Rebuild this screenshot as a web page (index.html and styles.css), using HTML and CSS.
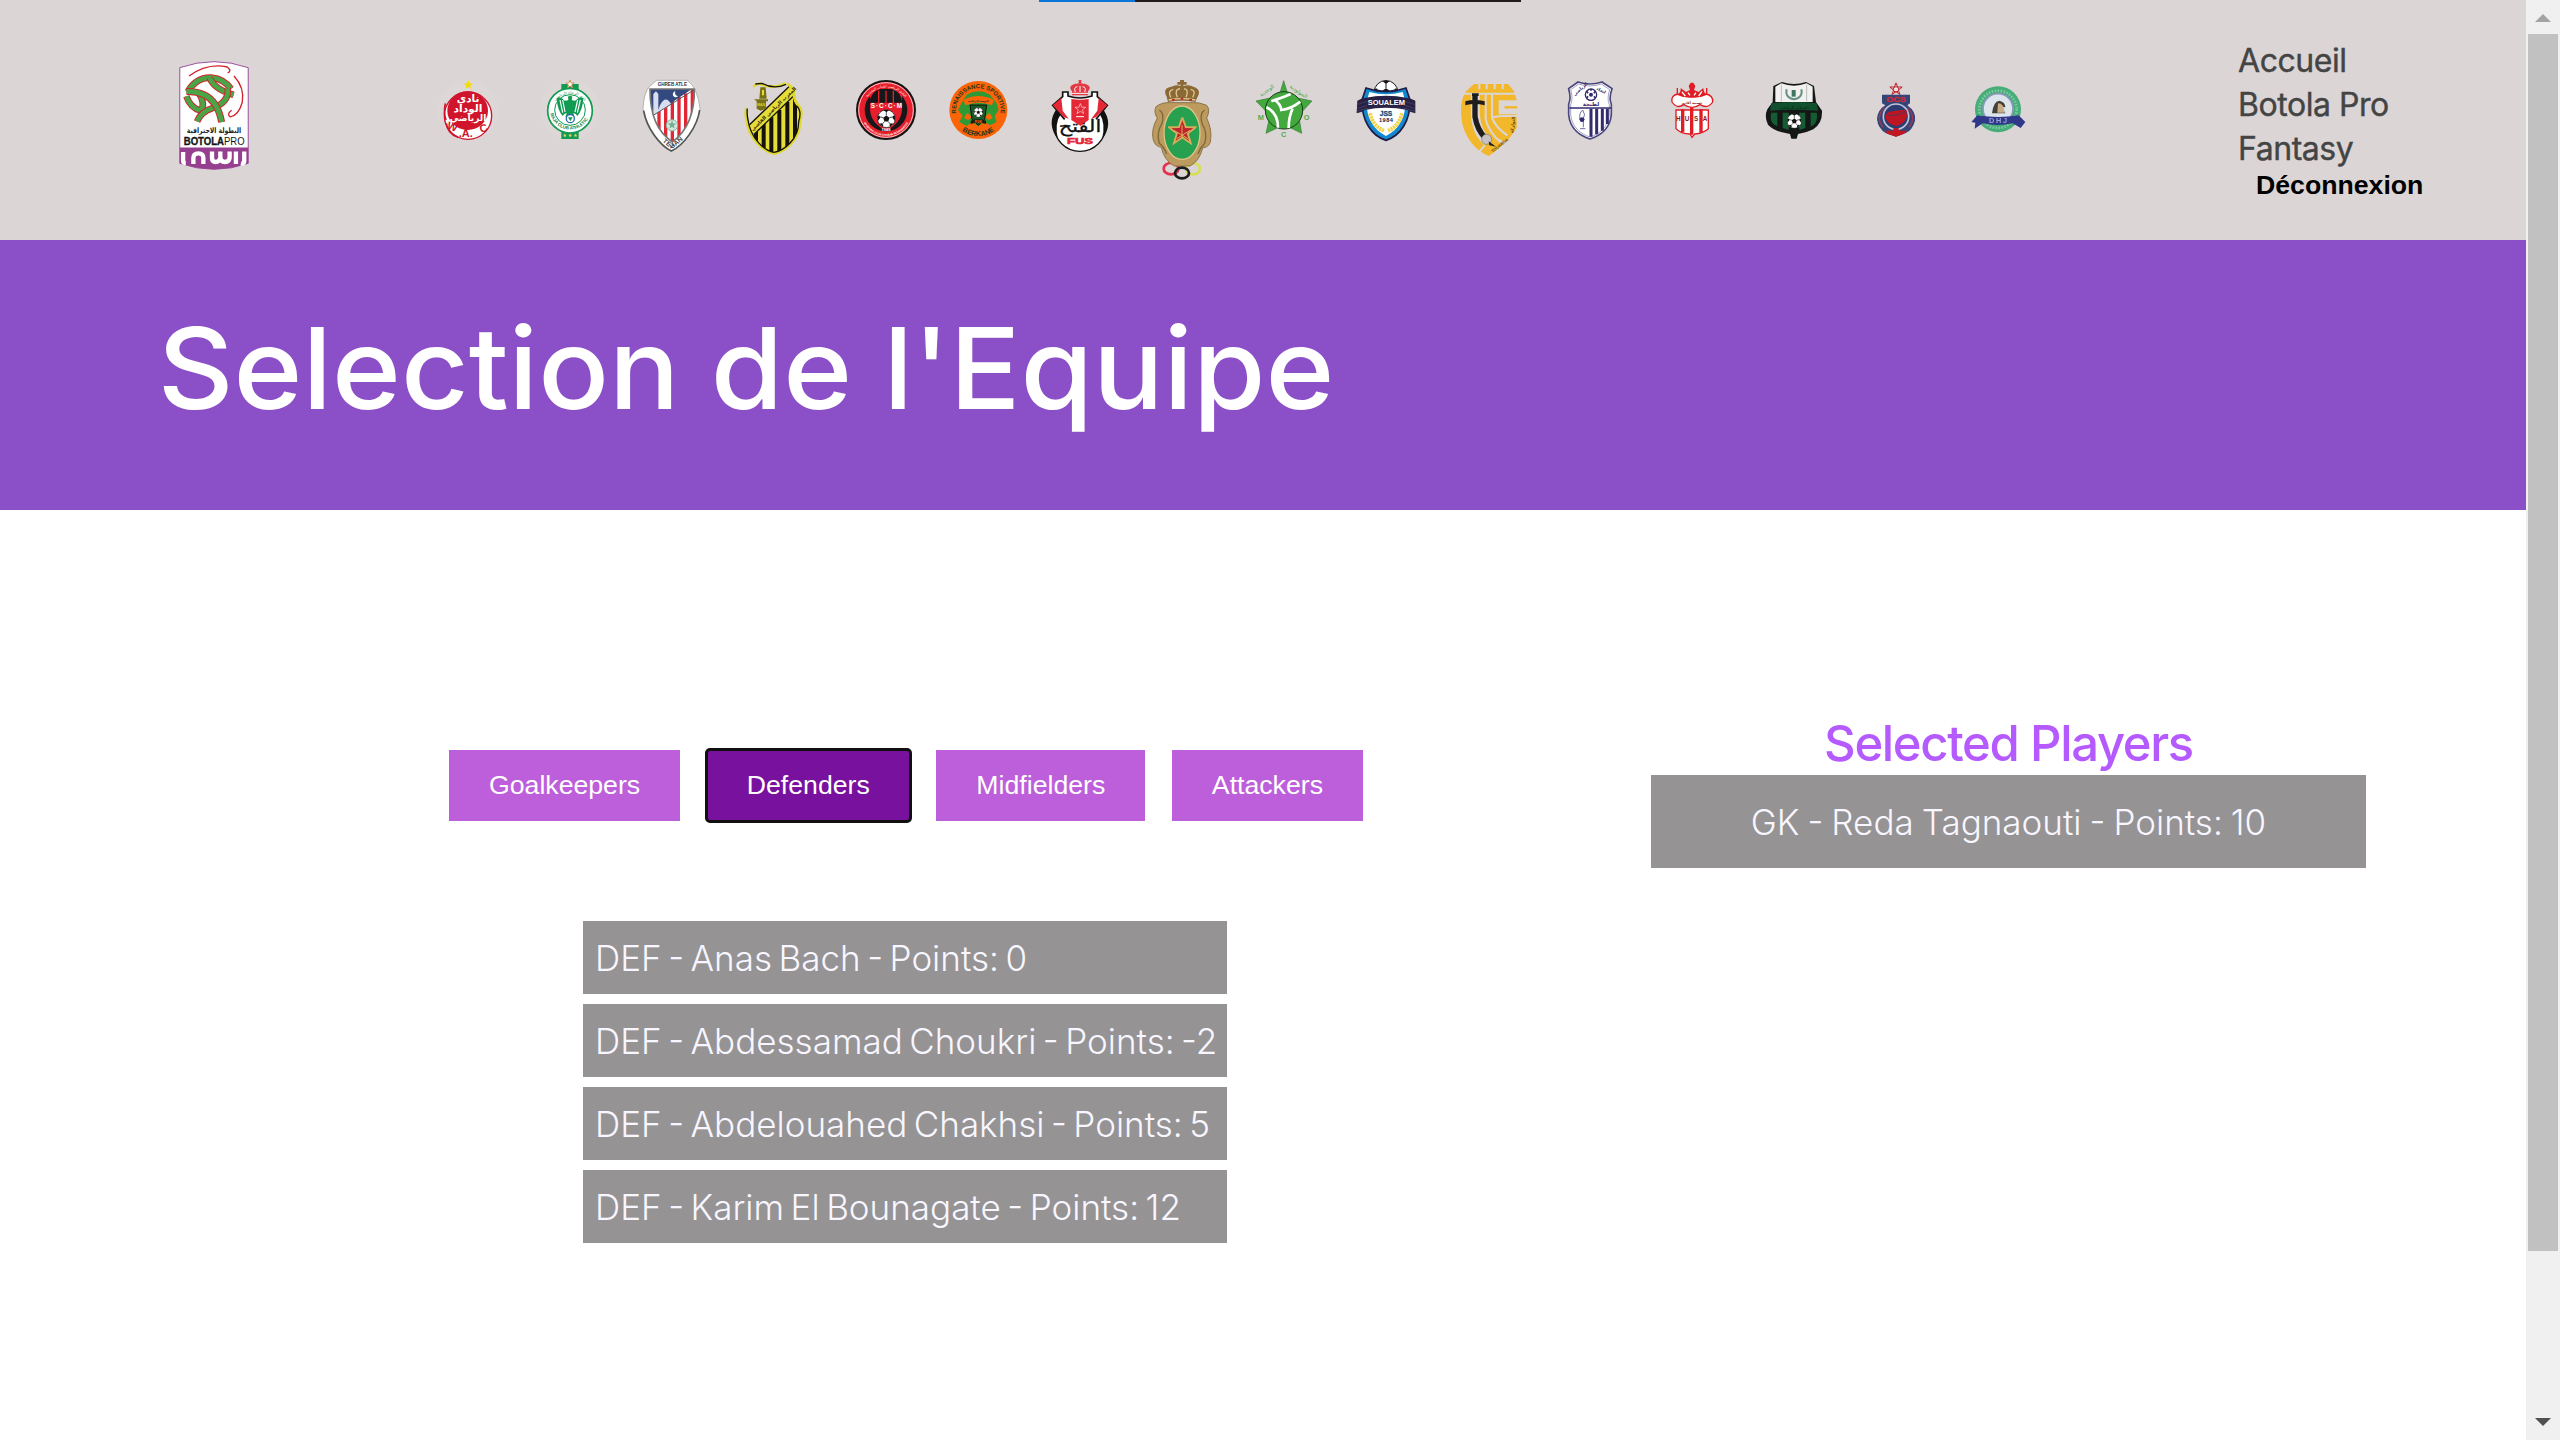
FILE: index.html
```html
<!DOCTYPE html>
<html lang="fr">
<head>
<meta charset="utf-8">
<title>Selection de l'Equipe</title>
<link rel="stylesheet" href="styles.css">
</head>
<body>
<svg class="defs" width="0" height="0" aria-hidden="true">
  <symbol id="ball" viewBox="-50 -50 100 100">
    <circle r="48" fill="#fff" stroke="#151515" stroke-width="4"/>
    <path fill="#151515" d="M0-17 17-5 10 15H-10L-17-5ZM-15-46 15-46 0-34ZM46-15 46 12 33-3 36-16ZM-46-15-46 12-33-3-36-16ZM20 42 38 27 24 25 16 34ZM-20 42-38 27-24 25-16 34Z"/>
    <path stroke="#151515" stroke-width="4" fill="none" d="M0-17V-36M17-5 35-10M10 15 22 30M-10 15-22 30M-17-5-35-10"/>
  </symbol>
  <symbol id="star" viewBox="-10 -10 20 20">
    <path d="M0-10 2.4-3.2 9.5-3.1 3.8 1.3 5.9 8.1 0 4-5.9 8.1-3.8 1.3-9.5-3.1-2.4-3.2Z"/>
  </symbol>
  <path id="band-a" d="M22 92Q80 90 108 130Q122 152 128 184"/>
  <path id="band-b" d="M26 92Q52 48 96 50Q136 54 156 84"/>
  <path id="band-c" d="M92 50Q104 84 164 102"/>
  <path id="band-d" d="M146 82Q152 124 100 142Q66 152 54 182"/>
  <path id="band-e" d="M22 106Q34 142 66 150Q80 128 58 94"/>
</svg>

<div class="strip"><i class="strip-done"></i></div>

<div class="window">
<div class="page">
<header class="header">
  <svg class="brand" viewBox="0 0 210 328">
    <path d="M2 20Q105-16 208 20V308Q105 344 2 308Z" fill="#fff" stroke="#9b4f9d" stroke-width="3"/>
    <path d="M2 260H208V308Q105 344 2 308Z" fill="#963f8f"/>
    <g fill="none">
      <path stroke="#d2232a" stroke-width="4" d="M30 45Q85 5 145 18Q160 30 146 36M165 45Q198 80 190 125Q178 165 154 168Q142 160 158 148"/>
      <g stroke="#d2232a" stroke-width="20"><use href="#band-e"/><use href="#band-b"/></g>
      <g stroke="#4aa547" stroke-width="14"><use href="#band-e"/><use href="#band-b"/></g>
      <use href="#band-c" stroke="#d2232a" stroke-width="20"/><use href="#band-c" stroke="#4aa547" stroke-width="14"/>
      <use href="#band-d" stroke="#d2232a" stroke-width="20"/><use href="#band-d" stroke="#4aa547" stroke-width="14"/>
      <use href="#band-a" stroke="#d2232a" stroke-width="21"/><use href="#band-a" stroke="#4aa547" stroke-width="15"/>
    </g>
    <text transform="translate(105 217) scale(.8 1)" text-anchor="middle" class="ar bold" font-size="23" fill="#222">البطولة الاحترافية</text>
    <text x="14" y="252" textLength="121" lengthAdjust="spacingAndGlyphs" class="bold" font-size="31" fill="#151515" stroke="#151515">BOTOLA</text>
    <text x="135" y="252" textLength="62" lengthAdjust="spacingAndGlyphs" font-size="31" fill="#151515">PRO</text>
    <path fill="none" stroke="#fff" stroke-width="13" stroke-linejoin="round" d="M12 274V300Q12 307 20 307M43 310V292Q43 278 58 278T73 292V310M99 272V292Q99 304 110 304T124 292V272M124 290Q124 304 138 304T152 290V272M171 272V310M196 272V302Q194 310 186 308"/>
  </svg>

  <nav class="clubs">
    <svg class="club" viewBox="0 0 180 180">
      <circle cx="90" cy="90" r="90" fill="#fff" opacity=".06"/>
      <use href="#star" x="76" y="0" width="30" height="30" fill="#f2dc00"/>
      <circle cx="90" cy="107" r="71" fill="#fff" stroke="#d0142c" stroke-width="4"/>
      <ellipse cx="89" cy="92" rx="61" ry="58" fill="#d0142c"/>
      <path d="M25 130Q28 160 60 172M22 70Q16 100 24 120" stroke="#d0142c" stroke-width="5" fill="none"/>
      <g class="ar bold" fill="#fff" text-anchor="middle"><text x="90" y="66" font-size="31">نادي</text><text x="90" y="96" font-size="32">الوداد</text><text x="90" y="124" font-size="27">الرياضي</text></g>
      <g class="bold" fill="#d0142c" font-size="33"><text x="24" y="151" transform="rotate(20 40 151)">W</text><text x="62" y="172">.A.</text><text x="130" y="160" transform="rotate(-22 130 160)">C</text></g>
    </svg>
    <svg class="club" viewBox="0 0 180 180">
      <circle cx="90" cy="90" r="90" fill="#fff" opacity=".06"/>
      <path d="M64 12H116V30H64ZM64 150H116V177H64Z" fill="#109a52"/>
      <circle cx="90" cy="92" r="67" fill="#fff" stroke="#109a52" stroke-width="5"/>
      <circle cx="90" cy="90" r="46" fill="none" stroke="#109a52" stroke-width="3"/>
      <use href="#star" x="77" y="0" width="26" height="26" fill="#fff" stroke="#c8894a" stroke-width="2"/>
      <path fill="#109a52" d="M84 50Q90 44 97 50L95 60Q108 66 112 56Q126 50 130 54Q128 90 112 108Q106 98 100 100L104 112H76L80 100Q74 98 68 108Q52 90 50 54Q56 50 68 56Q72 66 85 60Z"/>
      <path stroke="#fff" stroke-width="3.5" d="M60 60 68 98M68 60 75 96M121 60 112 98M113 60 105 96" fill="none"/>
      <circle cx="91" cy="116" r="12" fill="#fff" stroke="#2b6cae" stroke-width="4"/><path d="M84 112H98L91 124Z" fill="#109a52"/>
      <path id="raja-low" d="M31 101A61 61 0 0 0 150 101" fill="none"/>
      <text class="bold" font-size="13.5" fill="#0b8544"><textPath href="#raja-low">RAJA CLUB ATHLETIC</textPath></text>
      <path id="raja-top" d="M39 78A54 54 0 0 1 141 78" fill="none"/>
      <text class="ar" font-size="12" fill="#109a52"><textPath href="#raja-top" startOffset="50%" text-anchor="middle">نادي الرجاء الرياضي</textPath></text>
      <g fill="#ead36b"><use href="#star" x="68" y="160" width="13" height="13"/><use href="#star" x="84" y="160" width="13" height="13"/><use href="#star" x="100" y="160" width="13" height="13"/></g>
    </svg>
    <svg class="club" viewBox="0 0 180 216">
      <path d="M44 1H136Q166 22 174 85C168 140 126 196 88 214C50 196 8 140 3 85Q6 38 22 20Z" fill="#fff" stroke="#999" stroke-width="2"/>
      <path d="M5 92C14 145 55 198 88 213C125 196 166 140 173 90" stroke="#555" stroke-width="5" fill="none"/>
      <clipPath id="tet"><path d="M24 27H157C158 110 132 156 91 186C48 156 24 110 24 27Z"/></clipPath>
      <g clip-path="url(#tet)"><path fill="#fff" d="M0 0H180V216H0Z"/><path stroke="#e12736" stroke-width="10" d="M51 80V200M71 70V200M91 60V200M111 50V200M131 40V200M151 20V200"/><path fill="#34497f" d="M20 20H160L24 112Z"/><path fill="#d8def0" d="M24 112V96L34 94V42L42 34 49 42V90L54 76Q70 44 86 70L82 78Z"/><path d="M24 112 157 29" stroke="#555" stroke-width="3"/></g>
      <path d="M24 27H157C158 110 132 156 91 186C48 156 24 110 24 27Z" fill="none" stroke="#777" stroke-width="5"/>
      <path d="M100 34A9 9 0 1 0 108 49A12 12 0 0 1 100 34Z" fill="#fff"/>
      <circle cx="90" cy="136" r="17" fill="#d6e6dc" stroke="#7eb79b" stroke-width="3"/><use href="#star" x="76" y="121" width="28" height="28" fill="#6fae91"/>
      <text class="bold" x="91" y="18" font-size="15" text-anchor="middle" textLength="88" lengthAdjust="spacingAndGlyphs" fill="#333">GHREB ATLE</text>
      <path id="tet-low" d="M52 178L89 208 132 172" fill="none"/><text class="bold" font-size="20" fill="#444"><textPath href="#tet-low" startOffset="50%" text-anchor="middle">TETUAN</textPath></text>
    </svg>
    <svg class="club" viewBox="0 0 180 226">
      <clipPath id="mas"><path d="M50 10Q90 28 128 10L150 28Q142 55 164 78Q178 92 168 125C168 180 120 216 90 221C60 216 14 175 8 120Q2 95 12 78V50Z"/></clipPath>
      <g clip-path="url(#mas)"><path fill="#e6dc38" d="M22 170 156 10 180 100V226H0Z"/><path stroke="#14120a" stroke-width="12" d="M36 150V226M59 132V226M82 112V226M106 90V226M130 66V226M153 40V226"/><path d="M20 152 152 24" stroke="#17150a" stroke-width="34"/><path d="M20 152 152 24" stroke="#e6dc38" stroke-width="26"/></g>
      <path d="M28 20Q42 5 56 14Q90 28 124 10M8 84Q2 100 8 120C14 175 60 216 90 221C120 216 168 180 168 125Q178 92 164 78Q146 58 150 28L128 10" fill="none" stroke="#dfd72c" stroke-width="8"/><path d="M34 12 54 10Q90 30 126 13M10 86Q8 100 12 120C20 175 60 212 90 217C120 212 164 178 164 125Q174 92 158 78" fill="none" stroke="#14120a" stroke-width="4"/>
      <path d="M49 22H65L68 56H46ZM30 58H72V64H66V86L50 92 38 86V64Z" fill="#777113"/><path d="M54 30H60V46H54Z" fill="#e6dc38"/>
      <text class="bold" x="39" y="78" font-size="11" fill="#dfd72c">MAS</text>
      <text class="ar bold" font-size="15" text-anchor="middle" transform="translate(92 90) rotate(-44)" fill="#27230a">المغرب الرياضي الفاسي</text>
    </svg>
    <svg class="club club-shifted" viewBox="0 0 180 180">
      <circle cx="90" cy="90" r="87" fill="#e71e2b" stroke="#151515" stroke-width="6"/><circle cx="90" cy="90" r="82" fill="none" stroke="#f8c9cb" stroke-width="3"/>
      <circle cx="90" cy="90" r="64" fill="#17171a"/><path d="M42 32H138V90Q135 130 90 152Q45 130 42 90Z" fill="#e71e2b"/>
      <path d="M40 62Q50 34 66 30V68H40ZM70 28H88V68H70ZM92 28H110V68H92ZM114 30Q132 36 138 62V68H114Z" fill="#17171a"/>
      <text class="bold" x="91" y="84" font-size="19" text-anchor="middle" textLength="94" fill="#fff">S·C·C·M</text>
      <use href="#ball" x="63" y="88" width="56" height="56"/>
      <text class="bold" x="90" y="154" font-size="12" text-anchor="middle" fill="#fff">1948</text>
      <path id="sccm-top" d="M29 60A68 68 0 0 1 151 60" fill="none"/><text class="ar" font-size="10" fill="#fff"><textPath href="#sccm-top" startOffset="50%" text-anchor="middle">النادي الرياضي لشباب المحمدية</textPath></text>
      <path id="sccm-low" d="M15 108A77 77 0 0 0 165 108" fill="none"/><text class="bold" font-size="8" fill="#fff"><textPath href="#sccm-low" startOffset="50%" text-anchor="middle">SPORTING CLUB CHABAB MOHAMMEDIA</textPath></text>
    </svg>
    <svg class="club" viewBox="0 0 180 180">
      <circle cx="91" cy="90" r="87" fill="#fb6407"/>
      <path id="rsb-top" d="M29 117A67 67 0 1 1 153 117" fill="none"/><text class="bold" font-size="18" fill="#26331d"><textPath href="#rsb-top" startOffset="50%" text-anchor="middle">RENAISSANCE SPORTIVE</textPath></text>
      <path id="rsb-low" d="M32 142A79 79 0 0 0 150 142" fill="none"/><text class="bold" font-size="21" fill="#26331d"><textPath href="#rsb-low" startOffset="50%" text-anchor="middle">BERKANE</textPath></text>
      <path fill="#2f9a35" d="M56 44Q91 24 126 44L146 70 152 90 140 108 146 126 126 136 110 126 91 138 72 126 56 138 34 126 44 108 30 90 40 70Z"/>
      <path fill="#fb6407" d="M46 60Q91 36 138 60L132 76Q91 60 52 76ZM58 98 72 112 60 120 48 114ZM124 98 110 112 122 120 134 114Z"/>
      <text class="ar bold" x="91" y="66" font-size="8" text-anchor="middle" fill="#26331d">النهضة البركانية</text>
      <path d="M66 75H116L110 118 91 136 72 118Z" fill="#165c24" stroke="#111" stroke-width="3"/><use href="#ball" x="76" y="82" width="30" height="30"/>
      <path d="M68 122Q91 114 114 122V132Q91 124 68 132Z" fill="#1d1d12"/><text class="bold" x="91" y="129" font-size="10" text-anchor="middle" fill="#fb6407">RSB</text>
    </svg>
    <svg class="club" viewBox="0 0 180 216">
      <circle cx="90" cy="136" r="78" fill="#fff" stroke="#111" stroke-width="4"/><path d="M20 86Q-12 130 24 178Q12 130 34 100ZM158 86Q192 130 156 178Q168 130 148 100Z" fill="#111"/>
      <path d="M38 50V36H54V48Q90 60 126 48V36H142V50L172 76 138 118 92 140 44 118 8 76Z" fill="#fff"/>
      <path d="M44 118 8 76 38 50V36H54V48Q90 60 126 48V36H142V50L172 76 138 118" fill="none" stroke="#111" stroke-width="5"/>
      <path d="M34 54 8 76 42 112 56 116 38 92ZM146 54 172 76 138 112 124 116 142 92ZM64 57Q90 62 116 57V120L92 138 64 120Z" fill="#e52835"/><use href="#star" x="74" y="70" width="34" height="34" fill="none" stroke="#fff" stroke-width="1"/><path d="M78 110H102" stroke="#fff" stroke-width="3"/>
      <path d="M66 46V34Q54 20 68 14Q82 8 90 12 98 8 112 14 126 20 114 34V46ZM86 0H94V12H86Z" fill="#e23b45"/><path d="M76 36Q70 22 82 20M104 36Q110 22 98 20M90 18V36M66 40H114" stroke="#fff" stroke-width="3" fill="none"/>
      <text class="ar" transform="translate(90 156) scale(1.25 1)" font-size="50" text-anchor="middle" fill="#111" stroke="#111">الفتح</text>
      <text class="bold" x="90" y="192" font-size="29" text-anchor="middle" textLength="78" lengthAdjust="spacingAndGlyphs" fill="#e52835" stroke="#e52835" stroke-width="2">FUS</text>
    </svg>
    <svg class="club" viewBox="0 0 180 300">
      <g fill="none" stroke-width="8"><ellipse cx="57" cy="266" rx="22" ry="17" stroke="#e4314d"/><ellipse cx="123" cy="266" rx="21" ry="17" stroke="#d5df57"/></g>
      <path d="M58 68Q30 66 12 80Q4 96 16 114Q-4 150 4 180Q10 200 28 202Q36 240 66 258H114Q142 244 152 204Q176 200 176 178 180 148 164 114 176 90 164 76 142 66 122 68Z" fill="#bd9a5e" stroke="#8c7446" stroke-width="3"/>
      <path d="M22 90Q38 100 30 130Q12 160 22 190Q36 200 44 222M158 90Q142 100 150 130Q168 160 158 190Q144 204 138 222" stroke="#7d683e" stroke-width="4" fill="none"/>
      <ellipse cx="90" cy="158" rx="54" ry="80" fill="#27a04f" stroke="#dfc48a" stroke-width="4"/><use href="#star" x="48" y="112" width="86" height="86" fill="#c0252d" stroke="#d4ad5a" stroke-width="1.3"/><path d="M90 136V175M66 151 108 176M114 151 74 176" stroke="#d4ad5a" stroke-width="3"/>
      <path d="M48 66 44 50Q30 24 58 20Q72 12 86 18V14H76V6H84V0H96V6H104V14H94V18Q112 12 124 20 150 28 136 52L130 66Q90 58 48 66Z" fill="#8c6a36"/><path d="M56 52Q46 32 64 28M76 52Q66 28 84 26M102 52Q112 28 96 26M122 52Q134 32 116 28M50 60Q90 52 130 60" stroke="#e0c994" stroke-width="4" fill="none"/><path d="M60 60H68M86 56H94M112 60H120" stroke="#bf2a2d" stroke-width="6"/>
      <ellipse cx="90" cy="279" rx="21" ry="16" fill="none" stroke="#1c1c1c" stroke-width="8"/>
    </svg>
    <svg class="club" viewBox="0 0 180 180">
      <path d="M89 2 103 48 174 63 134 106 143 160 90 134 36 160 48 106 6 63 75 48Z" fill="#43a83e" stroke="#3a7d35" stroke-width="2"/>
      <circle cx="90" cy="91" r="56" fill="#43a83e" stroke="#183b16" stroke-width="3"/>
      <path fill="none" stroke="#fff" stroke-width="8" d="M60 58Q80 72 82 90Q110 88 139 65M52 64Q92 50 110 42M37 82Q72 98 72 143M116 86Q104 110 104 144"/>
      <g class="bold" font-size="22" fill="#55a851"><text x="11" y="119">M</text><text x="81" y="171">C</text><text x="149" y="119">O</text></g>
      <text class="ar" font-size="16" fill="#43a83e" transform="translate(22 50) rotate(-36)">الوجدية</text><text class="ar" font-size="16" fill="#43a83e" transform="translate(106 22) rotate(34)">المولودية</text>
    </svg>
    <svg class="club" viewBox="0 0 180 183">
      <use href="#ball" x="53" y="0" width="74" height="74"/>
      <path d="M30 24Q90 46 150 24L162 60C164 120 134 168 90 181C46 168 16 120 18 60Z" fill="#1288d0" stroke="#211c45" stroke-width="5"/>
      <path d="M40 36Q90 50 140 36L148 64C150 112 128 150 90 168C52 150 30 112 32 64Z" fill="#fff"/>
      <path d="M4 62Q14 56 26 54Q90 40 154 54Q166 56 178 62V100Q164 98 154 90Q90 76 26 90Q16 98 2 100Z" fill="#282044"/><path d="M2 74Q90 38 178 74M2 86Q90 50 178 86M2 94Q90 60 178 94" stroke="#5d5878" stroke-width="1.5" fill="none"/>
      <path d="M34 54Q90 44 146 54V84Q90 74 34 84Z" fill="#282044"/>
      <text class="bold" x="91" y="76" font-size="22" text-anchor="middle" textLength="112" lengthAdjust="spacingAndGlyphs" fill="#fff">SOUALEM</text>
      <text class="bold" x="90" y="108" font-size="22" text-anchor="middle" textLength="38" lengthAdjust="spacingAndGlyphs" fill="#164f7a" stroke="#164f7a">JSS</text><text class="bold" x="90" y="125" font-size="17" text-anchor="middle" textLength="42" fill="#222041">1984</text>
      <path d="M42 100Q52 140 84 152M138 100Q128 140 96 152" stroke="#f3d24c" stroke-width="12" stroke-dasharray="7 2" fill="none"/>
    </svg>
    <svg class="club" viewBox="0 0 180 228">
      <path fill="#f2b72a" d="M48 12H150L168 34 176 60V90L176 144 152 178Q120 210 92 228Q30 200 12 128Q2 70 22 36Z"/>
      <g fill="none" stroke="#dbd5d5">
        <path stroke-width="6" d="M16 41H172M64 12V28M86 12V28M110 12V28M134 12V28"/>
        <path stroke-width="27" d="M52 41V104Q56 160 88 184"/>
        <path stroke-width="6" d="M83 41V118Q92 156 130 190M102 41V114Q116 146 148 166M80 196 58 222M116 176 152 196M102 112 128 108H178"/>
        <path stroke-width="18" d="M178 70H131V94H178"/>
      </g>
      <path fill="#f2b72a" d="M140 79H178V85H140Z"/>
      <path d="M51 42V110Q58 150 82 174" stroke="#1f1d1c" stroke-width="16" fill="none"/><path d="M22 76V64Q48 56 80 64V76Q50 68 22 76ZM42 40H62V48H42Z" fill="#1f1d1c"/><circle cx="86" cy="178" r="15" fill="#c8c3c2" stroke="#777" stroke-width="2"/><path d="M92 184 114 200 94 196Z" fill="#1f1d1c"/>
      <text class="bold" font-size="12" fill="#6b4c0c" transform="translate(104 218) rotate(-38)">TOUARGA</text><text class="ar bold" font-size="13" fill="#6b4c0c" transform="translate(166 160) rotate(-84)">التواركة</text>
    </svg>
    <svg class="club" viewBox="0 0 180 180">
      <path d="M54 6Q90 18 126 6L156 26Q146 56 154 72V104C150 146 120 168 90 177C60 168 30 146 26 104V72Q34 56 26 26Z" fill="#fff" stroke="#4a467e" stroke-width="5"/><path d="M56 12Q90 24 124 12L149 29Q140 56 148 74V104C144 142 118 162 90 171C62 162 36 142 32 104V74Q40 56 32 29Z" fill="none" stroke="#77739f" stroke-width="2"/>
      <path stroke="#322b6d" stroke-width="9" d="M93 86V170M110 86V163M127 86V152M142 86V132"/><path d="M28 84H153" stroke="#322b6d" stroke-width="4"/>
      <circle cx="93" cy="44" r="17" fill="#fff" stroke="#322b6d" stroke-width="4"/><circle cx="93" cy="44" r="6" fill="#322b6d"/><path d="M80 34 84 40M106 34 102 40M80 54 84 49M106 54 102 49M93 27V32" stroke="#322b6d" stroke-width="5"/>
      <g class="ar bold" fill="#322b6d" font-size="13"><text transform="translate(44 48) rotate(-42)">الرياضي</text><text transform="translate(108 28) rotate(28)">اتحاد</text><text x="93" y="77" font-size="16" text-anchor="middle">لطنجة</text></g>
      <path d="M68 90Q56 100 60 118M68 90Q78 104 70 116V142M58 116Q64 128 74 118M60 146H76" stroke="#322b6d" stroke-width="2" fill="none"/><circle cx="66" cy="119" r="7" fill="#322b6d"/>
    </svg>
    <svg class="club" viewBox="0 0 180 180">
      <path d="M42 90V146Q56 162 84 162L90 172 98 162Q124 160 139 146V90Z" fill="#fff" stroke="#e01c24" stroke-width="4"/><path stroke="#e01c24" stroke-width="10" d="M62 88V156M89 82V164M117 88V158"/>
      <path d="M48 42Q26 46 30 66Q44 88 66 74Q90 90 114 74Q138 88 152 66Q154 46 132 42Q90 60 48 42Z" fill="#fff" stroke="#e01c24" stroke-width="4"/>
      <path d="M44 44Q58 40 56 24L72 36 84 30 80 18 86 8H94L100 18 96 30 110 36 124 24Q124 40 136 44Q116 54 90 52 64 54 44 44Z" fill="#e01c24"/><path d="M60 36 70 48M78 38 84 46M102 38 96 46M120 34 110 48" stroke="#fff" stroke-width="4"/><path d="M46 24V42M134 24V42" stroke="#e01c24" stroke-width="4"/>
      <text class="ar bold" x="90" y="72" font-size="10" text-anchor="middle" fill="#8e1618">حسنية أكادير</text>
      <g class="bold" font-size="19" fill="#8e1618"><text x="42" y="124">H</text><text x="68" y="124">U</text><text x="96" y="124">S</text><text x="122" y="124">A</text></g>
    </svg>
    <svg class="club soft" viewBox="0 0 180 180">
      <path d="M54 6Q90 18 126 6L150 18 156 66 174 92Q176 130 148 148Q124 160 102 162L98 176H82L78 162Q32 156 12 134Q0 110 10 88L26 66 28 18Z" fill="#141715"/>
      <path d="M52 10Q90 24 128 10L146 20V66H34V20Z" fill="#f1f1f1"/><path d="M52 14V64M128 14V64" stroke="#bbb" stroke-width="3"/>
      <path d="M68 28Q62 52 90 58Q118 52 112 28" fill="none" stroke="#679080" stroke-width="6"/><path d="M83 30H95V50H83Z" fill="#3e7660"/>
      <path d="M22 70Q90 62 158 70L162 92Q90 86 18 92Z" fill="#11502e"/><text class="ar" x="90" y="86" font-size="13" text-anchor="middle" fill="#0a2415">الشباب الرياضي</text>
      <path d="M22 98H40V138Q14 130 22 98ZM56 98H74V150L56 144ZM106 98H124V144L106 150ZM140 98H158Q164 130 140 140Z" fill="#145c34"/><use href="#ball" x="68" y="100" width="46" height="46"/>
    </svg>
    <svg class="club" viewBox="0 0 180 180">
      <use href="#star" x="71" y="8" width="38" height="38" fill="#efe5e4" stroke="#bd2a36" stroke-width="1.6"/><circle cx="90" cy="28" r="8" fill="none" stroke="#bd2a36" stroke-width="3"/>
      <path d="M48 44H132V70L124 76Q152 96 147 122Q140 150 118 160L90 170 60 160Q36 146 33 118Q34 90 58 76L48 70Z" fill="#344579"/>
      <path d="M56 84Q26 112 52 142M124 84Q154 112 128 142" fill="none" stroke="#9e3953" stroke-width="4"/><circle cx="90" cy="110" r="38" fill="#2d3c70" stroke="#bec3da" stroke-width="5"/>
      <path d="M58 110Q60 92 90 92 114 88 124 92 118 102 124 106 118 132 92 138 62 132 58 110Z" fill="#bd1622"/><path d="M66 106Q96 108 118 94" stroke="#2d3c70" stroke-width="2" fill="none"/><path d="M56 152H82V144H98V152H124L112 162 90 170 66 162Z" fill="#c31620"/>
      <text class="bold" x="90" y="65" font-size="23" text-anchor="middle" textLength="58" lengthAdjust="spacingAndGlyphs" fill="#d32935" stroke="#d32935">OCS</text>
    </svg>
    <svg class="club soft" viewBox="0 0 180 180">
      <circle cx="90" cy="88" r="69" fill="#45ad78"/><circle cx="90" cy="88" r="56" fill="none" stroke="#7ec9a1" stroke-width="8" stroke-dasharray="5 4"/><circle cx="90" cy="86" r="45" fill="#dce4ec" stroke="#8d97bd" stroke-width="5"/>
      <path d="M72 100Q76 64 94 62Q112 66 112 82L100 80 112 100Z" fill="#454038"/><path d="M90 70Q108 70 110 98H88Z" fill="#c7ae87"/>
      <path d="M10 126 28 106Q90 116 152 106L172 126 158 144 134 130Q90 140 44 130L20 146 22 128Z" fill="#303989"/>
      <text class="bold" x="90" y="129" font-size="22" text-anchor="middle" textLength="54" fill="#9aa2d6">DHJ</text>
    </svg>
  </nav>

  <nav class="menu">
    <a class="menu-link">Accueil</a>
    <a class="menu-link">Botola Pro</a>
    <a class="menu-link">Fantasy</a>
    <a class="logout">Déconnexion</a>
  </nav>
</header>

<section class="hero"><h1 class="hero-title">Selection de l'Equipe</h1></section>

<main class="main">
  <section class="market">
    <div class="tabs">
      <button class="tab">Goalkeepers</button>
      <button class="tab tab-active">Defenders</button>
      <button class="tab">Midfielders</button>
      <button class="tab">Attackers</button>
    </div>
    <ul class="players">
      <li class="player">DEF - Anas Bach - Points: 0</li>
      <li class="player">DEF - Abdessamad Choukri - Points: -2</li>
      <li class="player">DEF - Abdelouahed Chakhsi - Points: 5</li>
      <li class="player">DEF - Karim El Bounagate - Points: 12</li>
    </ul>
  </section>
  <aside class="selected">
    <h2 class="selected-title">Selected Players</h2>
    <div class="selected-player">GK - Reda Tagnaouti - Points: 10</div>
  </aside>
</main>
</div>

<div class="scrollbar">
  <svg class="arrow" viewBox="0 0 34 34"><path d="M9 22 17 14 25 22Z" fill="#a3a3a3"/></svg>
  <div class="thumb"></div>
  <svg class="arrow arrow-down" viewBox="0 0 34 34"><path d="M9 12H25L17 20Z" fill="#505050"/></svg>
</div>
</div>
</body>
</html>
```
FILE: styles.css
```css
* { box-sizing: border-box; }
body { margin: 0; width: 2560px; height: 1440px; overflow: hidden; background: #fff; font-family: Inter, "Liberation Sans", sans-serif; }
.defs { position: absolute; }

.strip { position: absolute; top: 0; left: 1039px; width: 482px; height: 2px; background: #201c1c; }
.strip-done { display: block; width: 96px; height: 2px; background: #0875d8; }

.window { display: flex; height: 1440px; }
.page { width: 2526px; }

.header { display: flex; align-items: flex-start; height: 240px; padding-left: 179px; background: #dbd5d5; }
.brand { width: 70px; height: 109px; margin-top: 61px; flex: none; font-family: "Liberation Sans", sans-serif; }
.clubs { display: flex; align-items: flex-start; gap: 42px; margin: 80px 0 0 189px; }
.club { width: 60px; flex: none; overflow: visible; font-family: "Liberation Sans", sans-serif; }
.club-shifted { margin: 0 -10px 0 10px; }
.ar { font-family: "DejaVu Sans", sans-serif; }
.bold { font-weight: 700; }
.soft { filter: blur(.6px); }

.menu { display: flex; flex-direction: column; margin: 39px 0 0 210px; color: #444; }
.menu-link { height: 44px; line-height: 44px; font-size: 32px; letter-spacing: -.45px; white-space: nowrap; -webkit-text-stroke: .4px #444; }
.logout { margin: -1px 0 0 18px; font: 700 26.67px/30px "Liberation Sans", sans-serif; color: #000; }

.hero { height: 270px; padding: 60px 0 0 158px; background: #8b50c7; }
.hero-title { margin: 0; font-size: 113px; line-height: 136px; font-weight: 500; color: #fff; white-space: nowrap; transform: scaleX(1.038); transform-origin: 4px 0; }

.main { display: flex; align-items: flex-start; padding: 240px 0 0 449px; }
.market { display: flex; flex-direction: column; align-items: center; width: 914px; }
.tabs { display: flex; justify-content: space-between; width: 914px; }
.tab { height: 71px; padding: 0 40px; border: 0; background: #bd5fda; color: #fff; font: 26.67px "Liberation Sans", sans-serif; }
.tab-active { background: #78129e; border-radius: 3px; outline: 3px solid #101010; outline-offset: -1px; }
.players { display: flex; flex-direction: column; gap: 10px; width: 644px; margin: 100px 2px 0 0; padding: 0; list-style: none; }
.player { height: 73px; padding-left: 12px; background: #959394; color: #f8f6ff; font-size: 35px; font-weight: 300; line-height: 75px; word-spacing: -3.3px; white-space: nowrap; }

.selected { width: 715px; margin: -36px 0 0 288px; text-align: center; }
.selected-title { margin: 0; height: 61px; color: #b45aff; font-size: 49px; font-weight: 500; line-height: 60px; letter-spacing: -1.35px; }
.selected-player { height: 93px; background: #959394; color: #f8f6ff; font-size: 35px; font-weight: 300; line-height: 95px; word-spacing: -1.8px; }

.scrollbar { display: flex; flex-direction: column; width: 34px; height: 1440px; background: #f0f0f0; }
.arrow { width: 34px; height: 34px; }
.thumb { width: 30px; height: 1217px; margin: 0 2px; background: #c1c1c1; }
.arrow-down { margin-top: auto; }
```
